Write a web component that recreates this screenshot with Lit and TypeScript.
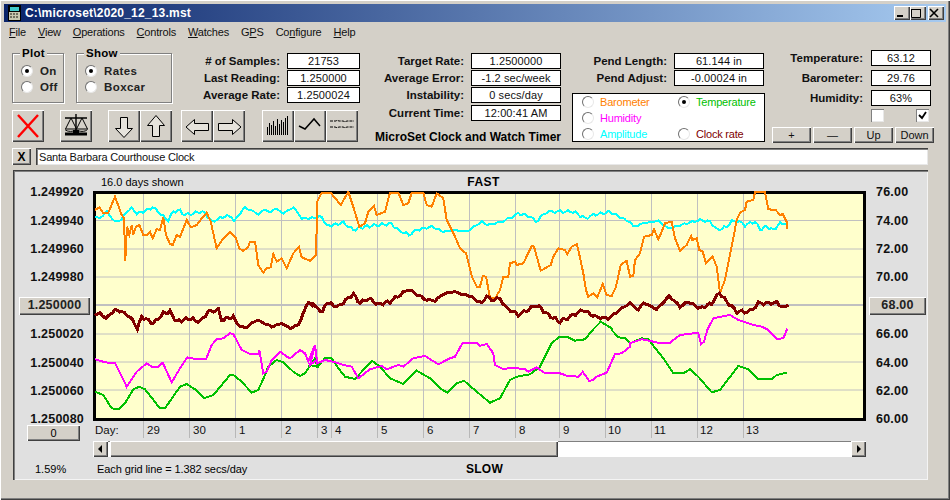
import { LitElement, html, css, svg } from "lit";
import { customElement } from "lit/decorators.js";

type P = [number, number];
const seg = (ox: number, oy: number, a: number[]): P[] => {
  const r: P[] = [];
  for (let i = 0; i < a.length; i += 2) r.push([ox + a[i] / 3, oy + a[i + 1] / 3]);
  return r;
};
const jitter = (pts: P[], amp: number, step: number): P[] => {
  const out: P[] = [];
  let n = 0;
  for (let i = 0; i < pts.length - 1; i++) {
    const [x0, y0] = pts[i];
    const [x1, y1] = pts[i + 1];
    const c = Math.max(1, Math.round(Math.abs(x1 - x0) / step));
    for (let k = 0; k < c; k++) {
      const t = k / c;
      n++;
      const w = Math.sin(n * 1.9) + 0.6 * Math.sin(n * 4.3);
      out.push([x0 + (x1 - x0) * t, y0 + (y1 - y0) * t + w * amp]);
    }
  }
  out.push(pts[pts.length - 1]);
  return out;
};
const str = (p: P[]) => p.map(([x, y]) => `${x.toFixed(1)},${y.toFixed(1)}`).join(" ");

const orange: P[] = [
  ...seg(0, 170, [285,120,298,112,310,130,325,128,345,80,365,135,372,145,376,272,381,170,388,195,395,165,400,195,408,170,418,165,430,195,440,195,450,185,458,205,470,178,480,180,490,142,498,195,510,222,518,225,530,195,540,200,548,180,560,150,572,172,590,165,605,145,620,128,632,155,650,235,670,205,675,200,690,185,708,205,718,235,730,243,745,230,750,215,765,215,775,285,790,308,800,295,812,292,820,252,830,275,845,265,860,295,880,250,897,230,905,262,930,272]),
  ...seg(310, 170, [0,272,18,255,22,95,35,68,62,68,92,105,115,65,130,110,148,170,165,160,175,125,192,108,200,135,225,125,240,68,265,68,280,105,295,100,305,68,340,68,350,105,365,110,380,70,400,85,410,150,435,200,450,235,468,250,485,318,500,350,510,350,518,318,528,320,540,382,555,385,570,360,580,320,595,320,600,280,615,275,620,285,640,280,665,228,672,230,692,302,722,285,730,260,745,235,765,240,772,252,785,230,800,222,810,262,820,310,828,360,835,380,850,370,862,382,878,342,890,375,905,378,918,350,932,285,950,272]),
  ...seg(630, 170, [0,320,10,318,15,270,30,250,42,200,65,195,72,178,85,208,95,185,105,160,125,155,135,205,150,242,170,225,183,198,187,210,200,205,208,240,218,245,228,280,248,260,260,290,270,368,285,330,295,280,310,205,320,150,330,128,345,120,350,95,370,90,375,67,405,67,415,118,437,120,450,135,458,132,470,155,472,178]),
];
const cyan: P[] = jitter([
  ...seg(0, 170, [285,140,300,145,320,125,345,155,365,148,380,125,395,115,410,130,430,125,458,112,475,125,490,140,505,150,520,125,540,122,555,135,580,130,600,125,615,130,635,155,660,145,675,138,695,140,702,155,720,130,735,112,750,120,775,132,795,118,810,128,825,115,850,130,880,112,905,145,925,145]),
  ...seg(310, 170, [0,145,35,140,50,168,70,165,100,158,130,180,165,170,200,165,245,162,265,180,297,195,320,180,365,170,400,185,430,180,470,185,515,155,535,165,575,155,600,145,625,130,660,140,678,155,710,125,750,125,790,125,825,145,850,135,900,125,950,152]),
  ...seg(630, 170, [0,155,10,170,40,160,85,152,115,175,135,170,170,160,210,150,240,155,262,180,290,170,305,155,320,152,345,165,375,155,390,178,410,170,430,180,450,160,470,160]),
], 1, 2.5);
const maroon: P[] = jitter([
  ...seg(0, 170, [285,435,300,430,318,445,345,420,365,425,390,440,412,475,425,440,460,460,490,430,510,425,530,455,565,445,600,455,625,425,655,420,665,450,700,440,710,460,735,475,770,450,815,470,845,460,870,475,895,465,910,430,925,395,950,410]),
  ...seg(310, 170, [0,400,38,425,50,398,85,410,130,372,150,400,175,385,205,403,240,395,295,358,350,390,375,392,400,372,430,365,480,378,515,400,530,378,545,390,570,385,585,410,625,435,680,405,715,435,750,455,820,420,855,440,895,445,950,405]),
  ...seg(630, 170, [0,400,25,420,40,398,80,418,118,378,150,410,175,395,210,415,245,400,268,368,290,395,320,425,360,425,385,400,440,398,465,415,475,405]),
], 1.1, 2.5);
const green: P[] = [
  ...seg(0, 330, [285,185,310,195,335,235,355,238,375,220,400,178,418,170,435,178,480,235,495,235,540,170,560,162,585,178,612,205,640,195,690,135,700,135,725,155,755,188,775,180,795,135,805,110,830,90,850,97,880,125,900,138,915,130,945,85,952,110]),
  ...seg(310, 330, [0,105,15,85,22,110,45,85,65,85,85,115,105,140,135,147,160,120,187,93,210,110,240,145,280,162,320,122,360,145,395,178,412,188,440,160,462,152,500,185,540,218,570,205,600,150,620,140,660,133,690,110,725,40,748,20,775,22,795,32,825,28,850,-2]),
  ...seg(310, 170, [872,455,905,475]),
  ...seg(310, 330, [905,0,925,22,945,25]),
  ...seg(630, 330, [0,40,35,25,55,28,100,85,130,130,160,130,180,118,205,140,245,187,270,180,325,108,355,118,385,148,425,148,440,135,470,128]),
];
const magenta: P[] = [
  ...seg(0, 330, [285,88,310,95,330,100,345,98,380,170,410,125,440,100,455,110,475,110,488,98,515,157,540,115,562,82,590,88,618,88,635,45,650,28,670,25,690,10,700,12,725,60,750,72,775,72,778,60,790,130,800,125,815,90,842,65,860,80,870,85,900,60,915,70,925,95,945,45,950,90]),
  ...seg(310, 330, [0,105,15,45,22,100,45,90,70,95,100,105,125,110,145,145,180,118,215,108,230,118,265,105,280,110,310,85,345,78,385,103,420,85,435,80,458,38,500,38,510,47,530,42,550,70,555,105,580,117,610,113,645,118,655,125,680,112,705,130,745,128,770,137,805,140,818,125,838,153,850,150,860,140,890,128,915,72,935,70,960,50]),
  ...seg(630, 330, [0,40,35,28,85,38,120,38,150,15,190,10,205,10,213,42,222,35,232,0]),
  ...seg(630, 170, [250,445,300,435,325,450,370,465,395,470,415,480,440,505]),
  ...seg(630, 330, [440,27,460,25,470,0]),
  ...seg(630, 170, [472,482]),
];

const hGrid = [220.5, 249, 277, 334, 362, 390];
const vGrid = [143, 189, 235, 281, 317, 331, 377, 423, 469, 515, 559, 605, 651, 697, 743];
const days: [string, number][] = [["Day:", 95], ["29", 147], ["30", 193], ["1", 239], ["2", 285], ["3", 321], ["4", 335], ["5", 381], ["6", 427], ["7", 473], ["8", 519], ["9", 563], ["10", 608], ["11", 654], ["12", 700], ["13", 746]];
const leftAxis = ["1.249920", "1.249940", "1.249960", "1.249980", "1.250000", "1.250020", "1.250040", "1.250060", "1.250080"];
const rightAxis = ["76.00", "74.00", "72.00", "70.00", "68.00", "66.00", "64.00", "62.00", "60.00"];
const bars = [8, 12, 10, 14, 9, 16, 11, 15, 13, 17, 19];

@customElement("app-root")
export class AppRoot extends LitElement {
  static styles = css`
    :host { display: block; width: 950px; height: 500px; font-family: "Liberation Sans", Arial, sans-serif; font-size: 11px; color: #000; }
    * { box-sizing: border-box; }
    .window { width: 950px; height: 500px; background: #d4d0c8; padding: 4px 4px 0; display: flex; flex-direction: column;
      box-shadow: inset 1px 1px 0 #fff, inset -1px -1px 0 #404040, inset -2px -2px 0 #808080; overflow: hidden; }
    .title { height: 18px; flex: none; background: linear-gradient(90deg, #0a246a, #a6caf0); display: flex; align-items: center; padding: 0 2px 0 4px; }
    .title svg { flex: none; margin-right: 4px; }
    .title b { color: #fff; font-size: 12px; letter-spacing: .2px; flex: 1; }
    .wbtns { display: flex; }
    .wbtn { width: 16px; height: 14px; padding: 0; background: #d4d0c8; display: flex; align-items: center; justify-content: center; }
    .wbtn.close { margin-left: 2px; }
    .raised { box-shadow: inset 1px 1px 0 #fff, inset -1px -1px 0 #404040, inset -2px -2px 0 #808080; border: none; background: #d4d0c8; }
    .menu { height: 19px; flex: none; display: flex; align-items: center; gap: 12px; font-size: 11px; letter-spacing: -.2px; padding: 0 0 2px 5px; margin-top: 1px; color: #111; }
    .menu span { flex: none; }
    .menu u { text-underline-offset: 1px; }
    .controls { display: flex; margin-left: 8px; margin-top: 4px; height: 102px; flex: none; }
    .block { width: 348px; flex: none; display: flex; flex-direction: column; }
    .row1 { display: flex; height: 57px; flex: none; }
    fieldset { margin: 0; padding: 3px 0 0 8px; border: 1px solid #808080; box-shadow: 1px 1px 0 #fff, inset 1px 1px 0 #fff; height: 57px; min-width: 0; }
    fieldset.plot { width: 52px; margin-right: 12px; }
    fieldset.show { width: 96px; }
    legend { font-weight: 700; font-size: 11.5px; padding: 0 2px; margin-left: -1px; line-height: 14px; background: #d4d0c8; letter-spacing: .3px; }
    .radio-line { display: flex; align-items: center; height: 16px; font-weight: 700; font-size: 11.5px; letter-spacing: .4px; gap: 7px; color: #222; }
    .radio { width: 12px; height: 12px; border-radius: 50%; flex: none; background: #fff; border: 1.5px solid; border-color: #707070 #e8e8e8 #e8e8e8 #707070; display: flex; align-items: center; justify-content: center; }
    .radio.on::after { content: ""; width: 4px; height: 4px; border-radius: 50%; background: #000; }
    .stats { display: flex; flex-direction: column; gap: 1px; }
    .stats1 { width: 188px; padding-top: 7px; }
    .stat { display: flex; align-items: center; justify-content: flex-end; gap: 7px; height: 16px; }
    .stat > span { font-weight: 700; font-size: 11.5px; color: #111; white-space: nowrap; }
    .val { height: 16px; background: #fff; border: 1px solid #000; display: flex; align-items: center; justify-content: center; font-size: 11px; letter-spacing: .1px; white-space: nowrap; color: #111; }
    .w73 { width: 73px; }
    .w90 { width: 90px; }
    .w60 { width: 60px; }
    .tools { display: flex; margin-top: 7px; height: 32px; }
    .tool { width: 32px; height: 32px; padding: 0; display: flex; flex: none; }
    .tool svg { display: block; }
    .gap16 { margin-left: 16px; }
    .gap9 { margin-left: 9px; }
    .gap17 { margin-left: 17px; }
    .col2 { width: 201px; flex: none; padding-top: 7px; display: flex; flex-direction: column; gap: 1px; }
    .col2 .late { margin-top: 1px; }
    .ctitle { font-weight: 700; font-size: 12px; text-align: right; margin-top: 8px; white-space: nowrap; }
    .col3 { width: 193px; margin-left: 11px; flex: none; padding-top: 7px; display: flex; flex-direction: column; gap: 1px; }
    .col3 .stat { padding-right: 1px; }
    .legendbox { margin-top: 6px; height: 49px; background: #fff; border: 1px solid #000; display: grid; grid-template-columns: 96px 1fr; grid-auto-rows: 16px; padding: 0 0 0 9px; font-size: 11px; letter-spacing: -.2px; }
    .lg { display: flex; align-items: center; gap: 6px; }
    .col4 { width: 162px; margin-left: 7px; flex: none; padding-top: 4px; display: flex; flex-direction: column; }
    .col4 .stat { margin-bottom: 4px; padding-right: 3px; justify-content: flex-end; gap: 8px; }
    .checks { display: flex; margin-left: 99px; gap: 32px; margin-top: -1px; height: 13px; }
    .chk { width: 13px; height: 13px; background: #fff; box-shadow: inset 1px 1px 0 #808080, inset -1px -1px 0 #e8e8e8; display: flex; align-items: center; justify-content: center; }
    .btnrow { display: flex; gap: 2px; margin-top: 5px; }
    .btn { width: 39px; height: 16px; padding: 0; font: 11px "Liberation Sans", Arial, sans-serif; color: #111; display: flex; align-items: center; justify-content: center; }
    .name { display: flex; margin: 0 0 0 8px; height: 17px; flex: none; gap: 5px; }
    .xbtn { width: 19px; height: 17px; padding: 0; font: 700 12px "Liberation Sans", Arial, sans-serif; display: flex; align-items: center; justify-content: center; }
    .field { width: 892px; height: 17px; background: #fff; box-shadow: inset 1px 1px 0 #404040, inset 2px 2px 0 #808080, inset -1px -1px 0 #e8e8e8; padding-left: 3px; display: flex; align-items: center; font-size: 11px; letter-spacing: -.2px; color: #111; }
    .panel { margin: 5px 0 0 9px; width: 915px; height: 310px; flex: none; background: #e0e0e0; box-shadow: inset 1px 1px 0 #404040, inset 2px 2px 0 #808080, inset -1px -1px 0 #f4f4f4; display: grid;
      grid-template-columns: 80px 773px 62px; grid-template-rows: 3px 18px 230px 20px 16px 22px; }
    .laxis, .raxis { grid-row: 2 / 4; margin-top: 5px; height: 256px; display: flex; flex-direction: column; font-weight: 700; font-size: 12.5px; letter-spacing: .2px; }
    .laxis { grid-column: 1; align-items: flex-end; }
    .raxis { grid-column: 3; align-items: flex-start; }
    .tick { height: 28.4px; flex: none; display: flex; align-items: center; color: #111; }
    .laxis .tick { padding-right: 9px; }
    .laxis .tick.b { padding-right: 3px; }
    .raxis .tick { padding-left: 10px; }
    .raxis .tick.b { padding-left: 3px; }
    .axbtn { height: 18px; font: 700 12.5px "Liberation Sans", Arial, sans-serif; letter-spacing: .2px; padding: 0 0 1px; color: #222; }
    .laxis .axbtn { width: 71px; }
    .raxis .axbtn { width: 57px; }
    .topline { grid-column: 2; grid-row: 2; display: grid; grid-template-columns: 1fr auto 1fr; align-items: center; padding-left: 8px; font-size: 11px; }
    .fast { font-weight: 700; font-size: 12px; letter-spacing: .4px; }
    .plot-svg { grid-column: 2; grid-row: 3 / 5; display: block; }
    .zero { grid-column: 1; grid-row: 4; margin: 4px 0 0 14px; width: 53px; height: 16px; font: 11px "Liberation Sans", Arial, sans-serif; padding: 0; }
    .scroll { grid-column: 2; grid-row: 5; display: flex; height: 16px; background: #fff; box-shadow: inset 0 1px 0 #808080; }
    .sb { flex: none; width: 15px; height: 16px; padding: 0; display: flex; align-items: center; justify-content: center; }
    .thumb { flex: none; width: 448px; height: 16px; margin-left: 2px; }
    .track { flex: 1; }
    .pct { grid-column: 1; grid-row: 6; padding: 2px 0 0 22px; display: flex; align-items: center; font-size: 11px; }
    .bottomline { grid-column: 2; grid-row: 6; display: grid; grid-template-columns: 1fr auto 1fr; align-items: center; padding: 2px 0 0 4px; font-size: 11px; letter-spacing: -.1px; }
    .bottomline b { font-size: 12px; letter-spacing: .3px; margin-left: 6px; }
    .slow { grid-column: 2; }
    .each { white-space: nowrap; }
    svg text { font-family: "Liberation Sans", Arial, sans-serif; font-size: 11.5px; fill: #111; }
    .curve { fill: none; stroke-width: 2; shape-rendering: crispEdges; }
    .curve.thick { stroke-width: 3; }
    .curve.c-green { stroke: #00c000; }
    .curve.c-magenta { stroke: #ff00ff; }
    .curve.c-cyan { stroke: #00ffff; }
    .curve.c-orange { stroke: #ff8000; }
    .curve.c-maroon { stroke: #800000; }
  `;

  private tool(icon: unknown, cls = "") {
    return html`<button class="tool raised ${cls}">${icon}</button>`;
  }
  private stat(label: string, value: string, w: string, cls = "") {
    return html`<div class="stat ${cls}"><span>${label}</span><div class="val ${w}">${value}</div></div>`;
  }
  private rl(text: string, on: boolean) {
    return html`<div class="radio-line"><i class="radio ${on ? "on" : ""}"></i>${text}</div>`;
  }
  private lg(text: string, color: string, on = false) {
    return html`<div class="lg"><i class="radio ${on ? "on" : ""}"></i><span style="color:${color}">${text}</span></div>`;
  }

  render() {
    const I = (c: unknown) => html`<svg width="32" height="32" viewBox="0 0 32 32">${c}</svg>`;
    return html`
      <div class="window">
        <div class="title">
          <svg width="13" height="16" viewBox="0 0 13 16"><rect width="13" height="16" fill="#000"/><rect x="2" y="2" width="9" height="4" fill="#3fc9c9"/><rect x="1" y="7" width="11" height="8" fill="#c8c8b0"/><path d="M2 8h2v2H2zM5 8h2v2H5zM8 8h2v2H8zM2 11h2v2H2zM5 11h2v2H5zM8 11h2v2H8z" fill="#707060"/></svg>
          <b>C:\\microset\\2020_12_13.mst</b>
          <div class="wbtns">
            <div class="wbtn raised"><svg width="12" height="10"><rect x="3" y="7" width="6" height="2" fill="#000"/></svg></div>
            <div class="wbtn raised"><svg width="12" height="10"><path d="M1.5 1.5h9v8h-9z" fill="none" stroke="#000"/><path d="M1 1h10v1H1z"/></svg></div>
            <div class="wbtn raised close"><svg width="12" height="10"><path d="M2 1l8 8M10 1l-8 8" stroke="#000" stroke-width="1.6"/></svg></div>
          </div>
        </div>
        <div class="menu">
          <span><u>F</u>ile</span>
          <span><u>V</u>iew</span>
          <span><u>O</u>perations</span>
          <span><u>C</u>ontrols</span>
          <span><u>W</u>atches</span>
          <span>G<u>P</u>S</span>
          <span>Co<u>n</u>figure</span>
          <span><u>H</u>elp</span>
        </div>
        <div class="controls">
          <div class="block">
            <div class="row1">
              <fieldset class="plot"><legend>Plot</legend>${this.rl("On", true)}${this.rl("Off", false)}</fieldset>
              <fieldset class="show"><legend>Show</legend>${this.rl("Rates", true)}${this.rl("Boxcar", false)}</fieldset>
              <div class="stats stats1">
                ${this.stat("# of Samples:", "21753", "w73")}
                ${this.stat("Last Reading:", "1.250000", "w73")}
                ${this.stat("Average Rate:", "1.2500024", "w73")}
              </div>
            </div>
            <div class="tools">
              ${this.tool(I(svg`<path d="M6 5l20 22M26 5L6 27" stroke="#f00" stroke-width="2.4" fill="none"/>`))}
              ${this.tool(I(svg`<path d="M16 4v17M5 8h22" stroke="#000" stroke-width="1.4" fill="none"/><path d="M11 8l-5.5 11h11zM22 8l-5.5 11h11z" fill="none" stroke="#000"/><path d="M5 19.5c2 2.5 9 2.5 11 0M16.5 19.5c2 2.5 9 2.5 11 0" fill="none" stroke="#000"/><rect x="5" y="22.5" width="22" height="3" fill="#000"/><rect x="13" y="20" width="6" height="3" fill="#000"/>`), "gap16")}
              ${this.tool(I(svg`<path d="M12.5 7.5h7v11h5l-8.5 9-8.5-9h5z" fill="#e6e3dc" stroke="#000"/>`), "gap16")}
              ${this.tool(I(svg`<path d="M12.5 26.5h7v-11h5l-8.5-10-8.5 10h5z" fill="#e6e3dc" stroke="#000"/>`))}
              ${this.tool(I(svg`<path d="M27.5 13.5v7h-14v4l-8.5-7.5 8.5-7.5v4z" fill="#e6e3dc" stroke="#000"/>`), "gap9")}
              ${this.tool(I(svg`<path d="M5.5 13.5v7h14v4l8.5-7.5-8.5-7.5v4z" fill="#e6e3dc" stroke="#000"/>`))}
              ${this.tool(I(svg`${bars.map((h, i) => svg`<rect x="${5 + i * 2}" y="${25 - h}" width="1" height="${h}" fill="#000"/>`)}`), "gap17")}
              ${this.tool(I(svg`<path d="M5 16l6 3 9-10 6 7" fill="none" stroke="#000" stroke-width="1.5"/>`))}
              ${this.tool(I(svg`<path d="M4 11h6l1-.7 2 .7h4l2 .7 2-.7h7M4 17h5l2 .7 2-.7h4l2 .7 2-.7h7" fill="none" stroke="#000" stroke-width="1" stroke-dasharray="3 1"/>`))}
            </div>
          </div>
          <div class="col2">
            ${this.stat("Target Rate:", "1.2500000", "w90")}
            ${this.stat("Average Error:", "-1.2 sec/week", "w90")}
            ${this.stat("Instability:", "0 secs/day", "w90")}
            ${this.stat("Current Time:", "12:00:41 AM", "w90", "late")}
            <div class="ctitle">MicroSet Clock and Watch Timer</div>
          </div>
          <div class="col3">
            ${this.stat("Pend Length:", "61.144 in", "w90")}
            ${this.stat("Pend Adjust:", "-0.00024 in", "w90")}
            <div class="legendbox">
              ${this.lg("Barometer", "#ff8000")}
              ${this.lg("Temperature", "#00c000", true)}
              ${this.lg("Humidity", "#ff00ff")}
              <div></div>
              ${this.lg("Amplitude", "#00ffff")}
              ${this.lg("Clock rate", "#800000")}
            </div>
          </div>
          <div class="col4">
            ${this.stat("Temperature:", "63.12", "w60")}
            ${this.stat("Barometer:", "29.76", "w60")}
            ${this.stat("Humidity:", "63%", "w60")}
            <div class="checks">
              <div class="chk"></div>
              <div class="chk"><svg width="9" height="9"><path d="M1 4l3 3 4-6" fill="none" stroke="#000" stroke-width="1.8"/></svg></div>
            </div>
            <div class="btnrow">
              <button class="btn raised">+</button>
              <button class="btn raised">—</button>
              <button class="btn raised">Up</button>
              <button class="btn raised">Down</button>
            </div>
          </div>
        </div>
        <div class="name">
          <button class="xbtn raised">X</button>
          <div class="field">Santa Barbara Courthouse Clock</div>
        </div>
        <div class="panel">
          <div class="laxis">
            ${leftAxis.map((t, i) => html`<div class="tick ${i === 4 ? "b" : ""}">${i === 4 ? html`<button class="axbtn raised">${t}</button>` : t}</div>`)}
          </div>
          <div class="topline"><span>16.0 days shown</span><b class="fast">FAST</b><span></span></div>
          <svg class="plot-svg" width="773" height="250" viewBox="93 191 773 250">
            <rect x="94.5" y="192.5" width="770" height="227" fill="#ffffcc" stroke="#000" stroke-width="3"/>
            ${hGrid.map((y) => svg`<line x1="96" x2="863" y1="${y}" y2="${y}" stroke="#c0c0c0" stroke-width="1"/>`)}
            <line x1="96" x2="863" y1="305" y2="305" stroke="#c0c0c0" stroke-width="2"/>
            ${vGrid.map((x) => svg`<line x1="${x + 0.5}" x2="${x + 0.5}" y1="194" y2="418" stroke="#c0c0c0"/><line x1="${x + 0.5}" x2="${x + 0.5}" y1="421" y2="438" stroke="#b8b8b8"/>`)}
            <polyline class="curve c-green" points="${str(green)}"/>
            <polyline class="curve c-magenta" points="${str(magenta)}"/>
            <polyline class="curve c-cyan" points="${str(cyan)}"/>
            <polyline class="curve c-orange" points="${str(orange)}"/>
            <polyline class="curve thick c-maroon" points="${str(maroon)}"/>
            ${days.map(([t, x]) => svg`<text x="${x}" y="434">${t}</text>`)}
          </svg>
          <div class="raxis">
            ${rightAxis.map((t, i) => html`<div class="tick ${i === 4 ? "b" : ""}">${i === 4 ? html`<button class="axbtn raised">${t}</button>` : t}</div>`)}
          </div>
          <button class="zero raised">0</button>
          <div class="scroll">
            <div class="sb raised"><svg width="5" height="8"><path d="M4 0v8L0 4z"/></svg></div>
            <div class="thumb raised"></div>
            <div class="track"></div>
            <div class="sb raised"><svg width="5" height="8"><path d="M1 0v8l4-4z"/></svg></div>
          </div>
          <div class="pct">1.59%</div>
          <div class="bottomline"><span class="each">Each grid line = 1.382 secs/day</span><b class="slow">SLOW</b><span></span></div>
        </div>
      </div>
    `;
  }
}
